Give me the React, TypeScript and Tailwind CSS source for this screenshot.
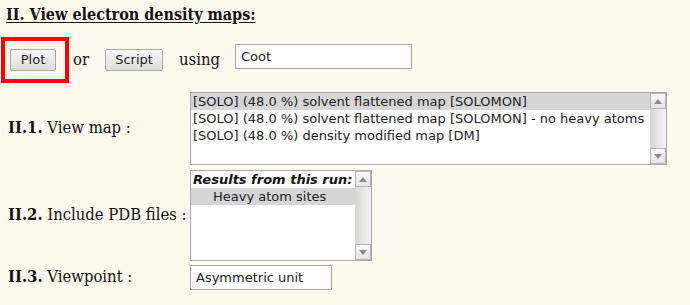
import React from "react";

const ScrollBtn = ({ dir }: { dir: "up" | "down" }) => (
  <div className="flex h-[16px] w-[16px] items-center justify-center border border-[#b4b4b0] bg-gradient-to-b from-[#fafafa] to-[#e4e4e4]">
    <svg width="8" height="5" viewBox="0 0 8 5">
      {dir === "up" ? (
        <polygon points="4,0 8,5 0,5" fill="#8a8a8a" />
      ) : (
        <polygon points="0,0 8,0 4,5" fill="#8a8a8a" />
      )}
    </svg>
  </div>
);

const Scrollbar = () => (
  <div className="flex w-[16px] flex-col bg-gradient-to-r from-[#d6d6d4] to-[#f4f4f2]">
    <ScrollBtn dir="up" />
    <div className="flex-1" />
    <ScrollBtn dir="down" />
  </div>
);

const Label = ({ num, text }: { num: string; text: string }) => (
  <div className="whitespace-nowrap pl-[2px] text-[16.5px] text-[#111]">
    <span className="font-bold">{num}</span> {text}
  </div>
);

const App: React.FC = () => {
  const maps = [
    "[SOLO] (48.0 %) solvent flattened map [SOLOMON]",
    "[SOLO] (48.0 %) solvent flattened map [SOLOMON] - no heavy atoms",
    "[SOLO] (48.0 %) density modified map [DM]",
  ];

  return (
    <div className="h-[305px] w-[690px] bg-[#fdf9ee] pl-[6px] pt-[5px] font-['DejaVu_Serif',serif] font-stretch-condensed text-[#111]">
      <h2 className="text-[16px] font-bold leading-[20px] underline underline-offset-[2px]">
        II. View electron density maps:
      </h2>

      {/* action row */}
      <div className="mt-[12px] flex items-center">
        <div className="-ml-[5px] flex h-[46px] w-[68px] items-center border-4 border-[#ff0000] pl-[5px]">
          <button className="h-[22px] w-[46px] rounded-[2px] border border-[#a8a8a8] bg-gradient-to-b from-[#f8f8f8] to-[#dedede] font-['DejaVu_Sans',sans-serif] font-stretch-normal text-[13px] text-[#222]">
            Plot
          </button>
        </div>
        <span className="ml-[4px] text-[16.5px]">or</span>
        <button className="ml-[16px] h-[22px] w-[58px] rounded-[2px] border border-[#a8a8a8] bg-gradient-to-b from-[#f8f8f8] to-[#dedede] font-['DejaVu_Sans',sans-serif] font-stretch-normal text-[13px] text-[#222]">
          Script
        </button>
        <span className="ml-[16px] text-[16.5px]">using</span>
        <div className="mb-[7px] ml-[15px] flex h-[25px] w-[177px] items-center border border-[#a5a5a5] bg-white pl-[5px] font-['DejaVu_Sans',sans-serif] font-stretch-normal text-[13px] text-[#222]">
          Coot
        </div>
      </div>

      {/* form rows */}
      <div className="mt-[9px] grid grid-cols-[184px_auto] items-center">
        <Label num="II.1." text="View map :" />
        <div className="flex h-[73px] w-[477px] border border-[#a9a9a4] bg-white font-['DejaVu_Sans',sans-serif] font-stretch-normal text-[13px] leading-[17px] text-[#222]">
          <div className="flex-1">
            {maps.map((m, i) => (
              <div key={i} className={`pl-[2px] ${i === 0 ? "bg-[#d6d6d6]" : ""}`}>
                {m}
              </div>
            ))}
          </div>
          <Scrollbar />
        </div>

        <div className="mt-[5px]">
          <Label num="II.2." text="Include PDB files :" />
        </div>
        <div className="mt-[5px] flex h-[91px] w-[182px] border border-[#a9a9a4] bg-white font-['DejaVu_Sans',sans-serif] font-stretch-normal text-[13px] leading-[17px] text-[#222]">
          <div className="flex-1">
            <div className="pl-[2px] font-bold italic text-[#111]">Results from this run:</div>
            <div className="bg-[#d6d6d6] pl-[22px]">Heavy atom sites</div>
          </div>
          <Scrollbar />
        </div>

        <div className="mt-[4px]">
          <Label num="II.3." text="Viewpoint :" />
        </div>
        <div className="mt-[4px] flex h-[25px] w-[142px] items-center border border-[#a5a5a5] bg-white pl-[5px] font-['DejaVu_Sans',sans-serif] font-stretch-normal text-[13px] text-[#222]">
          Asymmetric unit
        </div>
      </div>
    </div>
  );
};

export default App;
